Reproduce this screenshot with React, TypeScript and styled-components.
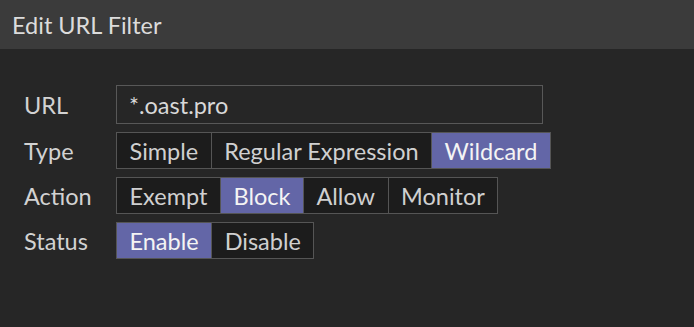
import React, { useState } from "react";
import styled, { createGlobalStyle } from "styled-components";

const GlobalStyle = createGlobalStyle`
  html, body {
    margin: 0;
    padding: 0;
    background: #262626;
  }
  body {
    font-family: Lato, "Open Sans", "Liberation Sans", sans-serif;
    color: #d2d2d2;
  }
`;

const Dialog = styled.div`
  width: 694px;
  height: 327px;
  display: flex;
  flex-direction: column;
  background: #262626;
`;

const Header = styled.header`
  height: 49px;
  display: flex;
  align-items: center;
  padding: 0 12px;
  background: #3b3b3b;
  font-size: 23.5px;
  color: #dcdcdc;
`;

const Form = styled.div`
  display: grid;
  grid-template-columns: 92px auto;
  row-gap: 8px;
  align-items: center;
  justify-items: start;
  padding: 36px 0 0 24px;
`;

const Label = styled.label`
  font-size: 23.5px;
  color: #d2d2d2;
`;

const TextInput = styled.input`
  box-sizing: border-box;
  width: 427px;
  height: 39px;
  padding: 0 12px;
  background: #262626;
  border: 1px solid #585858;
  color: #d8d8d8;
  font-family: inherit;
  font-size: 23.5px;
  outline: none;
`;

const Segmented = styled.div`
  display: flex;
  border: 1px solid #555;
  background: #1c1c1c;
`;

const Segment = styled.button<{ $active?: boolean }>`
  height: 35px;
  padding: 0 12.5px;
  border: none;
  border-left: 1px solid #555;
  background: ${(p) => (p.$active ? "#6366a7" : "#1c1c1c")};
  color: ${(p) => (p.$active ? "#f4f4f4" : "#d0d0d0")};
  font-family: inherit;
  font-size: 23.5px;
  cursor: pointer;
  &:first-child {
    border-left: none;
  }
`;

function Choice({ options, initial }: { options: string[]; initial: string }) {
  const [value, setValue] = useState(initial);
  return (
    <Segmented>
      {options.map((o) => (
        <Segment key={o} $active={o === value} onClick={() => setValue(o)}>
          {o}
        </Segment>
      ))}
    </Segmented>
  );
}

export default function App() {
  return (
    <Dialog>
      <GlobalStyle />
      <Header>Edit URL Filter</Header>
      <Form>
        <Label>URL</Label>
        <TextInput defaultValue="*.oast.pro" />
        <Label>Type</Label>
        <Choice options={["Simple", "Regular Expression", "Wildcard"]} initial="Wildcard" />
        <Label>Action</Label>
        <Choice options={["Exempt", "Block", "Allow", "Monitor"]} initial="Block" />
        <Label>Status</Label>
        <Choice options={["Enable", "Disable"]} initial="Enable" />
      </Form>
    </Dialog>
  );
}
